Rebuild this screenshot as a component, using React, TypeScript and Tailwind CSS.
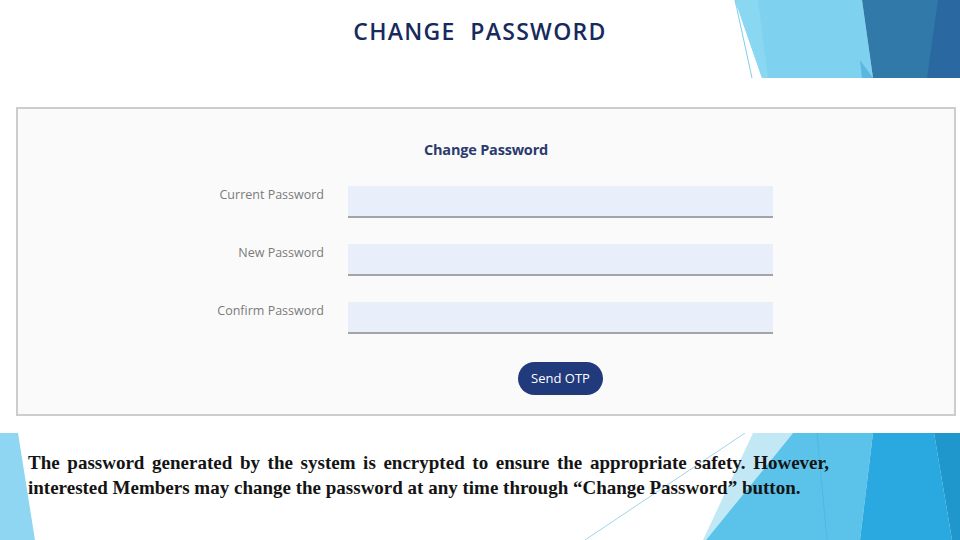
import React from "react";

type Field = {
    label: string;
};

const fields: Field[] = [
    { label: "Current Password" },
    { label: "New Password" },
    { label: "Confirm Password" },
];

function TopShapes() {
    return (
        <svg
            className="absolute top-0 left-0 pointer-events-none"
            width="960"
            height="78"
            viewBox="0 0 960 78"
        >
            <polygon points="735,0 862,0 873,78 762,78" fill="#7ed2ef" />
            <polygon points="735,0 758,0 768,78 762,78" fill="#8ad7f1" />
            <polygon points="860,60 873,78 862,78" fill="#5ab8e0" />
            <line x1="735" y1="0" x2="752" y2="78" stroke="#7ecde9" strokeWidth="1" />
            <polygon points="862,0 960,0 960,78 873,78" fill="#3079a8" />
            <polygon points="938,0 960,0 960,78 927,78" fill="#2968a0" />
        </svg>
    );
}

function BottomShapes() {
    return (
        <svg
            className="absolute bottom-0 left-0 pointer-events-none"
            width="960"
            height="107"
            viewBox="0 433 960 107"
        >
            <polygon points="0,433 18,433 35,540 0,540" fill="#8ed6f1" />
            <line x1="745" y1="433" x2="585" y2="540" stroke="#9dd6ec" strokeWidth="1" />
            <polygon points="753,433 793,433 706,540 703,540" fill="#c2e8f6" />
            <polygon points="793,433 873,433 860,540 706,540" fill="#5bc3ea" />
            <line x1="817" y1="433" x2="827" y2="540" stroke="#4fb8e2" strokeWidth="1" />
            <polygon points="873,433 934,433 952,540 860,540" fill="#29a9df" />
            <polygon points="934,433 960,433 960,540 952,540" fill="#1f96cc" />
        </svg>
    );
}

export default function App() {
    return (
        <div className="relative w-[960px] h-[540px] overflow-hidden bg-white">
            <TopShapes />
            <BottomShapes />

            {/* Title */}
            <div className="relative h-[78px] flex justify-center pt-[16px]">
                <h1
                    className="text-[23px] font-semibold tracking-[1.3px] text-[#172a5e] leading-[30px]"
                    style={{ fontFamily: '"Open Sans", sans-serif' }}
                >
                    CHANGE&nbsp; PASSWORD
                </h1>
            </div>

            {/* Card */}
            <div className="relative pt-[29px] pl-[16px]">
                <div
                    className="w-[940px] h-[309px] border-2 border-[#cdcdcd] bg-[#fafafa] flex flex-col"
                    style={{ fontFamily: '"Open Sans", sans-serif' }}
                >
                    <h2 className="mt-[31px] text-center text-[14.5px] font-bold text-[#2b3b6e] leading-[20px] tracking-[-0.2px]">
                        Change Password
                    </h2>

                    <div className="mt-[26px] flex flex-col gap-[26px]">
                        {fields.map((f) => (
                            <div key={f.label} className="flex gap-[24px]">
                                <label className="w-[306px] text-right text-[12.5px] text-[#7a7a7a] leading-[18px]">
                                    {f.label}
                                </label>
                                <div className="w-[425px] h-[32px] bg-[#e8eefa] border-b-2 border-[#a3a3a8]" />
                            </div>
                        ))}
                    </div>

                    <div className="mt-[28px] flex gap-[24px]">
                        <div className="w-[306px]" />
                        <div className="w-[425px] flex justify-center">
                            <button className="h-[33px] px-[13px] rounded-full bg-[#213a7c] text-white text-[13px] leading-[33px]">
                                Send OTP
                            </button>
                        </div>
                    </div>
                </div>
            </div>

            {/* Note */}
            <div className="relative mt-[34px] pl-[28px]">
                <p
                    className="w-[801px] text-justify text-[19px] font-bold leading-[25px] text-[#141414]"
                    style={{ fontFamily: '"Liberation Serif", serif' }}
                >
                    The password generated by the system is encrypted to ensure the appropriate safety. However,
                    interested Members may change the password at any time through “Change Password” button.
                </p>
            </div>
        </div>
    );
}
